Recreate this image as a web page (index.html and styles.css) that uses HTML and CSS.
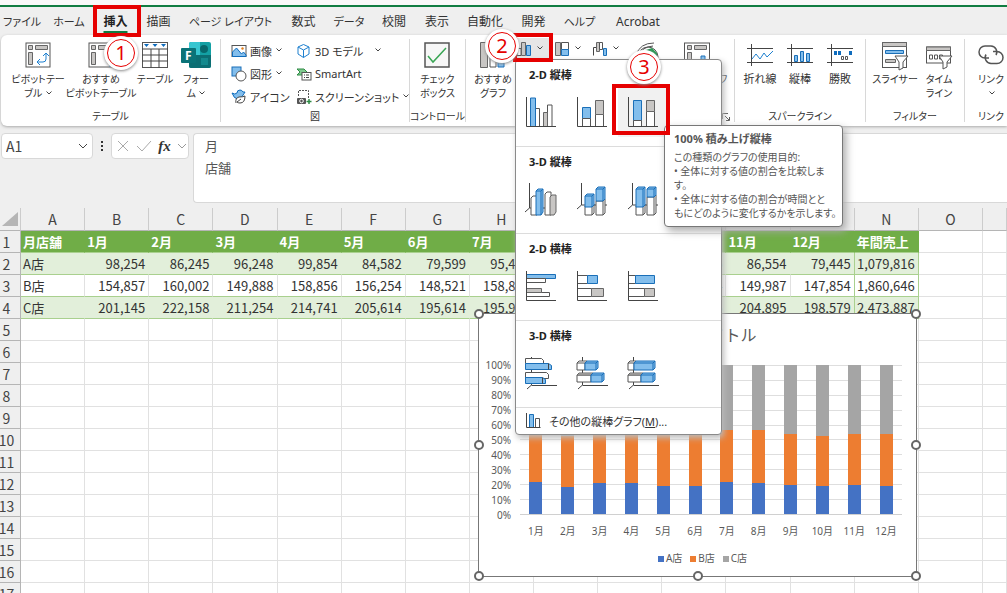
FILE: index.html
```html
<!DOCTYPE html>
<html lang="ja">
<head>
    <meta charset="UTF-8">
    <meta name="viewport" content="width=device-width, initial-scale=1.0">
    <title>店舗別売上</title>
    <link rel="stylesheet" href="styles.css">
</head>
<body>
<div class="app">
    <div class="title-edge"></div>

    <nav class="tabs">
        <button class="kana">ファイル</button>
        <button class="kana">ホーム</button>
        <button class="active">挿入</button>
        <button>描画</button>
        <button class="kana">ページ レイアウト</button>
        <button>数式</button>
        <button class="kana">データ</button>
        <button>校閲</button>
        <button>表示</button>
        <button>自動化</button>
        <button>開発</button>
        <button class="kana">ヘルプ</button>
        <button>Acrobat</button>
    </nav>

    <div class="ribbon">
        <section class="group group-table">
            <div class="group-body">
                <button class="big">
                    <svg class="icon" viewBox="0 0 26 26"><rect class="w" x="1" y="1" width="24" height="24"/><path class="g" d="M3.500 3.500h4v4h-4zM10.500 3.500h12v4h-12zM3.500 10.500h4v12h-4z"/><path class="bl" d="M13 20h5q3 0 3-3v-5M15 17l-3 3 3 3M18 14l3-3 3 3"/></svg>
                    <span>ピボットテー<br>ブル <svg class="chev" viewBox="0 0 6 4"><path d="M.5.5L3 3 5.500.5"/></svg></span>
                </button>
                <button class="big">
                    <svg class="icon" viewBox="0 0 26 26"><rect class="w" x="1" y="1" width="24" height="24"/><path class="g" d="M3.500 3.500h4v4h-4zM10.500 3.500h12v4h-12zM3.500 10.500h4v12h-4z"/><path class="bl" d="M22 16v9"/></svg>
                    <span>おすすめ<br>ピボットテーブル</span>
                </button>
                <button class="big">
                    <svg class="icon" viewBox="0 0 26 26"><rect class="w" x=".5" y=".5" width="25" height="25"/><path class="k" d="M0 7h26M0 13h26M0 19h26M9 7v19M17 7v19"/><path fill="#0f6cbd" d="M2 2h5L4.500 5zM10.500 2h5L13 5zM19 2h5l-2.500 3z"/></svg>
                    <span>テーブル</span>
                </button>
                <button class="big">
                    <svg class="icon icon-forms" viewBox="0 0 30 26"><rect x="8" width="22" height="26" rx="2" fill="#13a0a4"/><path fill="#0b6e73" d="M8 13h22v11a2 2 0 0 1-2 2H10a2 2 0 0 1-2-2z"/><path fill="#37c6d0" d="M8 2a2 2 0 0 1 2-2h9v13H8z"/><circle cx="23" cy="7" r="4" fill="#07686c"/><rect x="20" y="16" width="7" height="7" fill="#13898d"/><rect y="6" width="15" height="15" rx="1" fill="#0a7378"/><text x="4" y="18" class="forms-letter">F</text></svg>
                    <span>フォー<br>ム <svg class="chev" viewBox="0 0 6 4"><path d="M.5.5L3 3 5.500.5"/></svg></span>
                </button>
            </div>
            <h2>テーブル</h2>
        </section>

        <section class="group group-illust">
            <div class="group-body">
                <button class="small">
                    <svg class="icon-s" viewBox="0 0 16 16"><rect class="w" x="1" y="2.500" width="14" height="11"/><path d="M1.500 9l4-4 5 6 2-2 2.500 3v1.500h-13.500z" fill="#83beec" stroke="#0f6cbd"/><circle cx="11.500" cy="5.500" r="1.200" fill="#e07b1a"/></svg>
                    画像<svg class="chev" viewBox="0 0 6 4"><path d="M.5.5L3 3 5.500.5"/></svg>
                </button>
                <button class="small">
                    <svg class="icon-s" viewBox="0 0 16 16"><path class="bl" d="M7.500 1.500L13 4v7l-5.500 3.500L2 11V4zM2 4l5.500 3L13 4M7.500 7v7.500"/></svg>
                    3D モデル<svg class="chev chev-far" viewBox="0 0 6 4"><path d="M.5.5L3 3 5.500.5"/></svg>
                </button>
                <button class="small">
                    <svg class="icon-s" viewBox="0 0 16 16"><rect class="b" x="1" y="1" width="9" height="9"/><circle cx="10" cy="10" r="5" fill="#fff" stroke="#555"/></svg>
                    図形<svg class="chev" viewBox="0 0 6 4"><path d="M.5.5L3 3 5.500.5"/></svg>
                </button>
                <button class="small">
                    <svg class="icon-s" viewBox="0 0 16 16"><path d="M1 3h7l3 3-3 3H1l3-3z" fill="#7fc98f" stroke="#2e8b45"/><rect class="w" x="6" y="6.500" width="9" height="7.500"/><path class="k" d="M8 9h1M10 9h3M8 11.500h1M10 11.500h3"/></svg>
                    SmartArt
                </button>
                <button class="small">
                    <svg class="icon-s" viewBox="0 0 16 16"><path d="M1 4q3 2 5 0 0-3 3-3 2 0 3 2h2q-1 2-2 3-1 4-5 4-4 0-6-6z" fill="#83beec" stroke="#0f6cbd"/><path d="M5 14q-1-5 3-6 4 0 6-1 0 7-5 7-2 0-3-1l4-3" fill="#fff" stroke="#444"/></svg>
                    アイコン
                </button>
                <button class="small">
                    <svg class="icon-s" viewBox="0 0 16 16"><path d="M2.500 7V1.500h10V9" fill="none" stroke="#555" stroke-dasharray="2 1"/><rect x="1" y="9" width="9" height="6" rx="1" fill="#555"/><circle cx="5.500" cy="12" r="1.800" fill="#555" stroke="#fff"/><path d="M13 10v5M10.500 12.500h5" stroke="#2e8b45" stroke-width="1.500"/></svg>
                    スクリーンショット<svg class="chev" viewBox="0 0 6 4"><path d="M.5.5L3 3 5.500.5"/></svg>
                </button>
            </div>
            <h2>図</h2>
        </section>

        <section class="group group-control">
            <div class="group-body">
                <button class="big">
                    <svg class="icon" viewBox="0 0 26 26"><rect x="1" y="1" width="24" height="24" fill="#f7f7f7" stroke="#555" stroke-width="1.500"/><path d="M4 14l5 6L22 6" fill="none" stroke="#3aa655" stroke-width="1.500"/></svg>
                    <span>チェック<br>ボックス</span>
                </button>
            </div>
            <h2>コントロール</h2>
        </section>

        <section class="group group-chart">
            <div class="group-body">
                <button class="big">
                    <svg class="icon" viewBox="0 0 26 26"><path class="g" d="M.5.5h7v25h-7z"/><path class="w" d="M10 8h6v17h-6z"/><path class="b" d="M18 12h6v13h-6z"/></svg>
                    <span>おすすめ<br>グラフ</span>
                </button>
                <button class="split pressed">
                    <svg class="icon-s" viewBox="0 0 16 16"><path class="w" d="M1 7.500h4v7H1z"/><path class="g" d="M5.500 1.500h4v13h-4z"/><path class="b" d="M10.500 4.500h4v10h-4z"/></svg>
                    <svg class="chev" viewBox="0 0 6 4"><path d="M.5.5L3 3 5.500.5"/></svg>
                </button>
                <button class="split">
                    <svg class="icon-s" viewBox="0 0 16 16"><path class="g" d="M1.500 1.500h5v13h-5z"/><path class="w" d="M7.500 1.500h7v7h-7z"/><path class="b" d="M7.500 8.500h7v6h-7z"/></svg>
                    <svg class="chev" viewBox="0 0 6 4"><path d="M.5.5L3 3 5.500.5"/></svg>
                </button>
                <button class="split">
                    <svg class="icon-s" viewBox="0 0 16 16"><path class="k" d="M1.500 14.500v-8h3"/><path class="g" d="M4.500 1.500h3v9h-3z"/><path class="w" d="M7.500 1.500h3v7h-3z"/><path class="b" d="M11.500 7.500h3v7h-3z"/></svg>
                    <svg class="chev" viewBox="0 0 6 4"><path d="M.5.5L3 3 5.500.5"/></svg>
                </button>
                <button class="big big-map">
                    <svg class="icon" viewBox="0 0 26 26"><circle cx="14" cy="15" r="10" fill="#fff" stroke="#555"/><path d="M2 13Q6 1 20 1M5 13q3-8 14-9" fill="none" stroke="#555"/><path d="M12 8l6-2 5 5v8l-5-4-2-4z" fill="#2e9b57"/></svg>
                    <span>マップ</span>
                </button>
                <button class="big big-pivotchart">
                    <svg class="icon" viewBox="0 0 26 26"><rect class="w" x=".5" y="1" width="25" height="24"/><path class="g" d="M3.500 3.500h4v4h-4zM10.500 3.500h12v4h-12zM3.500 10.500h4v12h-4z"/><path class="b" d="M17 14h4v11h-4z"/></svg>
                    <span>ピボットグラフ</span>
                </button>
            </div>
            <h2>グラフ</h2>
            <svg class="launcher" viewBox="0 0 8 8"><path d="M.5 6V.5H6M3 3l4 4M7.500 4v3.500H4"/></svg>
        </section>

        <section class="group group-spark">
            <div class="group-body">
                <button class="big">
                    <svg class="icon" viewBox="0 0 26 26"><path class="k" d="M4.500 2v22M0 6.500h26M0 20.500h26"/><path class="bl" d="M5 17l4-5 4 5 4-6 3 4 6-6"/></svg>
                    <span>折れ線</span>
                </button>
                <button class="big">
                    <svg class="icon" viewBox="0 0 26 26"><path class="k" d="M4.500 2v22M0 6.500h26M0 20.500h26"/><path class="b" d="M7.500 13.500h3v6h-3zM13.500 9.500h3v10h-3zM19.500 11.500h3v8h-3z"/></svg>
                    <span>縦棒</span>
                </button>
                <button class="big">
                    <svg class="icon" viewBox="0 0 26 26"><path class="k" d="M4.500 2v22M0 6.500h26M0 20.500h26"/><path fill="#0f6cbd" d="M7 9h3v4H7zM11 9h3v4h-3zM22 9h3v4h-3z"/><path class="w" d="M14.500 14.500h2v3h-2zM18.500 14.500h2v3h-2z"/></svg>
                    <span>勝敗</span>
                </button>
            </div>
            <h2>スパークライン</h2>
        </section>

        <section class="group group-filter">
            <div class="group-body">
                <button class="big">
                    <svg class="icon" viewBox="0 0 26 26"><rect class="w" x=".5" y=".5" width="24" height="25"/><path class="g" d="M.5.5h24v4H.5z"/><path class="b" d="M3.500 8.500h18v3h-18z"/><path class="g" d="M3.500 17.500h10v3h-10z"/><path class="w" d="M13 14h13l-5 6v6l-4 2v-8z"/></svg>
                    <span>スライサー</span>
                </button>
                <button class="big">
                    <svg class="icon" viewBox="0 0 26 26"><rect class="w" x=".5" y="5" width="24" height="16"/><path class="g" d="M.5 5h24v3.500H.5z"/><path class="w" d="M3.500 13h3v4h-3zM8.500 13h3v4h-3zM13.500 13h3v4h-3z"/><path class="w" d="M13 14h13l-5 6v5l-4 2v-7z"/></svg>
                    <span>タイム<br>ライン</span>
                </button>
            </div>
            <h2>フィルター</h2>
        </section>

        <section class="group group-link">
            <div class="group-body">
                <button class="big">
                    <svg class="icon" viewBox="0 0 26 26"><path d="M11 16H7a6 6 0 0 1 0-12h6a6 6 0 0 1 5 9M15 9.500h4a6 6 0 0 1 0 12h-6a6 6 0 0 1-5-9" fill="none" stroke="#555" stroke-width="1.500"/></svg>
                    <span>リンク<br><svg class="chev" viewBox="0 0 6 4"><path d="M.5.5L3 3 5.500.5"/></svg></span>
                </button>
            </div>
            <h2>リンク</h2>
        </section>
    </div>

    <div class="formula-bar">
        <div class="name-box">
            <input type="text" value="A1" aria-label="名前ボックス">
            <svg class="chev-l" viewBox="0 0 10 6"><path d="M1 1l4 4 4-4"/></svg>
        </div>
        <span class="dots"><i></i><i></i><i></i></span>
        <div class="fx-box">
            <button aria-label="キャンセル"><svg width="14" height="14" viewBox="0 0 14 14"><path d="M2 2l10 10M12 2L2 12"/></svg></button>
            <button aria-label="入力"><svg width="16" height="14" viewBox="0 0 16 14"><path d="M1 7l5 5L15 2"/></svg></button>
            <button class="fx" aria-label="関数の挿入">fx</button>
            <svg class="chev-l chev-gray" viewBox="0 0 10 6"><path d="M1 1l4 4 4-4"/></svg>
        </div>
        <textarea class="formula" aria-label="数式バー">月
店舗</textarea>
    </div>

    <table class="sheet">
        <thead><tr id="columns"></tr></thead>
        <tbody id="rows"></tbody>
    </table>

    <!-- 100% 積み上げ縦棒グラフ -->
    <div class="chart">
        <div class="chart-title">グラフ タイトル</div>
        <div class="chart-body">
            <div class="y-axis">
                <span>100%</span><span>90%</span><span>80%</span><span>70%</span><span>60%</span><span>50%</span><span>40%</span><span>30%</span><span>20%</span><span>10%</span><span>0%</span>
            </div>
            <div class="plot" id="plot"></div>
        </div>
        <div class="x-axis" id="x-axis"></div>
        <div class="legend">
            <span><i class="fill-a"></i>A店</span>
            <span><i class="fill-b"></i>B店</span>
            <span><i class="fill-c"></i>C店</span>
        </div>
        <i class="handle top left"></i><i class="handle top right"></i>
        <i class="handle middle left"></i><i class="handle middle right"></i>
        <i class="handle bottom left"></i><i class="handle bottom center"></i><i class="handle bottom right"></i>
    </div>

    <div class="menu">
        <section>
            <h3>2-D 縦棒</h3>
            <div class="choices">
                <button aria-label="集合縦棒"><svg viewBox="0 0 32 32"><path class="w" d="M10.500 12.500h4v18h-4zM22.500 9h4.500v21.500h-4.500z"/><path class="g" d="M18.500 16.500h4v14h-4z"/><path class="b" d="M5.500 2h5v28.500h-5z"/><path class="k" d="M1.500 1v29.500H31"/></svg></button>
                <button aria-label="積み上げ縦棒"><svg viewBox="0 0 32 32"><path class="b" d="M6.500 11.500h8v11h-8z"/><path class="w" d="M6.500 22.500h8v8h-8zM19.500 18.500h8v12h-8z"/><path class="g" d="M19.500 4.500h8v14h-8z"/><path class="k" d="M1.500 1v29.500H31"/></svg></button>
                <button class="selected" aria-label="100% 積み上げ縦棒"><svg viewBox="0 0 32 32"><path class="b" d="M6.500 4.500h8v20h-8z"/><path class="w" d="M6.500 24.500h8v6h-8zM19.500 15.500h8v15h-8z"/><path class="g" d="M19.500 4.500h8v11h-8z"/><path class="k" d="M1.500 1v29.500H31"/></svg></button>
            </div>
        </section>
        <section>
            <h3>3-D 縦棒</h3>
            <div class="choices">
                <button aria-label="3-D 集合縦棒"><svg viewBox="0 0 32 32"><path class="k" d="M4.500 0v25L0 29M4.500 25H31"/><path class="w" d="M6 15l2-2h4v19H6zM20 11l2-2h4v23h-6z"/><path class="g" d="M25 14l2-2h4v17l-2 3h-4z"/><path class="b" d="M11 8l2-2h5v23l-2 3h-5zM11 8h5v24M16 8l2-2"/></svg></button>
                <button aria-label="3-D 積み上げ縦棒"><svg viewBox="0 0 32 32"><path class="k" d="M5.500 0v22L1 26M5.500 22H31"/><path class="w" d="M9 23h7l2-2v9l-2 2H9zM16 23v9M20 18h7l2-2v14l-2 2h-7zM27 18v14"/><path class="b" d="M9 13l2-2h7v11l-2 2H9zM9 13h7v11M16 13l2-2M20 6l2-2h7v12l-2 2h-7zM20 6h7v12M27 6l2-2"/></svg></button>
                <button aria-label="3-D 100% 積み上げ縦棒"><svg viewBox="0 0 32 32"><path class="k" d="M5.500 0v22L1 26M5.500 22H31"/><path class="w" d="M9 23h7l2-2v9l-2 2H9zM16 23v9M20 14h7l2-2v18l-2 2h-7zM27 14v18"/><path class="b" d="M9 6l2-2h7v18l-2 2H9zM9 6h7v18M16 6l2-2M20 6l2-2h7v8l-2 2h-7zM20 6h7v8M27 6l2-2"/></svg></button>
            </div>
        </section>
        <section>
            <h3>2-D 横棒</h3>
            <div class="choices">
                <button aria-label="集合横棒"><svg viewBox="0 0 32 32"><path class="b" d="M1.500 4.500H30.500v4H1.500z"/><path class="w" d="M1.500 8.500H20.500v4H1.500zM1.500 22.500H24.500v4H1.500z"/><path class="g" d="M1.500 18.500H16.500v4H1.500z"/><path class="k" d="M1.500 1v29.500H31"/></svg></button>
                <button aria-label="積み上げ横棒"><svg viewBox="0 0 32 32"><path class="w" d="M1.500 5.500H11.500v8H1.500zM1.500 18.500H15.500v8H1.500z"/><path class="b" d="M11.500 5.500h10v8h-10z"/><path class="g" d="M15.500 18.500h12v8h-12z"/><path class="k" d="M1.500 1v29.500H31"/></svg></button>
                <button aria-label="100% 積み上げ横棒"><svg viewBox="0 0 32 32"><path class="w" d="M1.500 5.500H8.500v8H1.500zM1.500 18.500H17.500v8H1.500z"/><path class="b" d="M8.500 5.500h19v8h-19z"/><path class="g" d="M17.500 18.500h10v8h-10z"/><path class="k" d="M1.500 1v29.500H31"/></svg></button>
            </div>
        </section>
        <section>
            <h3>3-D 横棒</h3>
            <div class="choices">
                <button aria-label="3-D 集合横棒"><svg viewBox="0 0 32 32"><path class="k" d="M6.500 0v28L2 32M6.500 28.500H32"/><path class="w" d="M.5 1.500h16l2 2v3H.5zM.5 15.500h21l2 2v4H.5z"/><path class="b" d="M.5 6.500h23l3 2v4H.5zM.5 20.500h17l3 2v4H.5z"/><path class="k" d="M23.500 6.500v6M17.500 20.500v6"/></svg></button>
                <button aria-label="3-D 積み上げ横棒"><svg viewBox="0 0 32 32"><path class="k" d="M6.500 0v28L2 32M6.500 28.500H32"/><path class="w" d="M1 6l2-2h8l-2 2v7H1zM1 6h8M1 18h14v7H1z"/><path class="g" d="M1 18l2-2h14l-2 2z"/><path class="b" d="M9 6l2-2h11v7l-2 2H9zM9 6h11v7M20 6l2-2M15 18l2-2h11v7l-2 2H15zM15 18h11v7M26 18l2-2"/></svg></button>
                <button aria-label="3-D 100% 積み上げ横棒"><svg viewBox="0 0 32 32"><path class="k" d="M6.500 0v28L2 32M6.500 28.500H32"/><path class="w" d="M1 6l2-2h6l-2 2v7H1zM1 6h6M1 18h13v7H1z"/><path class="g" d="M1 18l2-2h13l-2 2z"/><path class="b" d="M7 6l2-2h19v7l-2 2H7zM7 6h19v7M26 6l2-2M14 18l2-2h12v7l-2 2H14zM14 18h12v7M26 18l2-2"/></svg></button>
            </div>
        </section>
        <button class="more">
            <svg viewBox="0 0 16 16"><path class="b" d="M3.500 1.500h4v13h-4z"/><path class="w" d="M9.500 5.500h4v9h-4z"/><path class="k" d="M.5 0v14.500h14"/></svg>
            <span>その他の縦棒グラフ(<u>M</u>)...</span>
        </button>
    </div>

    <div class="tooltip" role="tooltip">
        <strong>100% 積み上げ縦棒</strong>
        <p>この種類のグラフの使用目的:<br>• 全体に対する値の割合を比較しま<br>す。<br>• 全体に対する値の割合が時間とと<br>もにどのように変化するかを示します。</p>
    </div>

    <!-- 操作手順の目印 -->
    <div class="mark mark-1"></div>
    <div class="mark mark-2"></div>
    <div class="mark mark-3"></div>
    <div class="step step-1">1</div>
    <div class="step step-2">2</div>
    <div class="step step-3">3</div>
</div>

<script>
    const columns = 'ABCDEFGHIJKLMNOP'.split('');
    const months = ['1月', '2月', '3月', '4月', '5月', '6月', '7月', '8月', '9月', '10月', '11月', '12月'];
    const shops = [
        { name: 'A店', total: 1079816, values: [98254, 86245, 96248, 99854, 84582, 79599, 95458, 94210, 88240, 85645, 86554, 79445] },
        { name: 'B店', total: 1860646, values: [154857, 160002, 149888, 158856, 156254, 148521, 158846, 162900, 154365, 149754, 149987, 147854] },
        { name: 'C店', total: 2473887, values: [201145, 222158, 211254, 214741, 205614, 195614, 195932, 197900, 207640, 213005, 204895, 198579] }
    ];
    const rowCount = 17;

    function makeRow(number, cells, className) {
        let html = `<tr class="${className}"><th scope="row">${number}</th>`;
        for (let i = 0; i < columns.length; i++) {
            html += `<td>${cells[i] || ''}</td>`;
        }
        return html + '</tr>';
    }

    // シート
    document.getElementById('columns').innerHTML =
        '<th class="corner"><svg viewBox="0 0 16 14"><path d="M16 0v14H0z"/></svg></th>' +
        columns.map(c => `<th scope="col">${c === 'P' ? '' : c}</th>`).join('');

    let rows = makeRow(1, ['月店舗', ...months, '年間売上'], 'data head');
    shops.forEach((shop, i) => {
        const cells = [shop.name, ...shop.values, shop.total].map(v => v.toLocaleString('en-US'));
        rows += makeRow(i + 2, cells, i % 2 === 0 ? 'data band' : 'data');
    });
    for (let n = 5; n <= rowCount; n++) {
        rows += makeRow(n, [], '');
    }
    document.getElementById('rows').innerHTML = rows;

    // グラフ
    document.getElementById('plot').innerHTML = months.map((m, i) => {
        const sum = shops.reduce((s, shop) => s + shop.values[i], 0);
        const [a, b, c] = shops.map(shop => shop.values[i] / sum * 100);
        return `<div class="bar"><i class="fill-c" style="height:${c}%"></i><i class="fill-b" style="height:${b}%"></i><i class="fill-a" style="height:${a}%"></i></div>`;
    }).join('');
    document.getElementById('x-axis').innerHTML = months.map(m => `<span>${m}</span>`).join('');
</script>
</body>
</html>
```
FILE: styles.css
```css
* {
    box-sizing: border-box;
}
body {
    margin: 0;
    font-family: "Noto Sans", "Noto Sans CJK JP", sans-serif;
    font-size: 12px;
    color: #333;
    background-color: #efefef;
}
button {
    border: 0;
    padding: 0;
    background: none;
    font: inherit;
    color: inherit;
    white-space: nowrap;
}
h2, h3, p {
    margin: 0;
    font-weight: normal;
}
svg {
    display: block;
    overflow: visible;
}
.app {
    position: relative;
    height: 100vh;
    overflow: hidden;
}

/* アイコンの色 */
.b { fill: #83beec; stroke: #1a6fb8; }
.w { fill: #fff; stroke: #555; }
.g { fill: #c8c6c4; stroke: #666; }
.k { fill: none; stroke: #444; }
.bl { fill: none; stroke: #1e80cf; }

/* タブ */
.title-edge {
    height: 5px;
    background-color: #f8f8f8;
}
.tabs {
    display: grid;
    grid-template-columns: 44px 50px 43px 43px 101px 45px 46px 44px 42px 54px 43px 49px 68px;
    height: 30px;
    border-top: 2px solid #107c41;
    font-feature-settings: "palt";
}
.tabs button {
    display: flex;
    justify-content: center;
    align-items: center;
}
.tabs .kana { font-size: 11px; }
.tabs .active {
    font-weight: bold;
    color: #222;
    text-decoration: underline 2px #107c41;
    text-underline-offset: 5px;
}

/* リボン */
.ribbon {
    display: flex;
    height: 91px;
    margin-left: 1px;
    background: white;
    border-radius: 6px 0 0 6px;
    box-shadow: 0 1px 3px #aaa;
    overflow: hidden;
    font-feature-settings: "palt";
}
.group {
    position: relative;
    display: flex;
    flex-direction: column;
    flex: none;
    margin: 4px 0;
    border-right: 1px solid #d8d8d8;
}
.group-body {
    display: flex;
    flex: 1;
    padding-top: 3px;
}
.group h2 {
    font-size: 10px;
    line-height: 12px;
    text-align: center;
    white-space: nowrap;
}
.group-table { width: 220px; }
.group-table .group-body {
    display: grid;
    grid-template-columns: 66px 60px 48px 34px;
    padding-left: 4px;
}
.group-illust { width: 189px; }
.group-illust .group-body {
    display: grid;
    grid-template-columns: 65px 1fr;
    grid-auto-rows: 23px;
    align-content: start;
    padding: 0 0 0 10px;
}
.group-control { width: 56px; }
.group-control .group-body { justify-content: center; }
.group-chart { width: 269px; }
.group-chart .group-body { padding-left: 8px; }
.group-chart .big { width: 38px; }
.group-chart .big-map { margin-left: 2px; }
.group-chart .big-pivotchart { margin-left: 12px; }
.group-spark { width: 131px; }
.group-spark .group-body { padding-left: 5px; }
.group-spark .big {
    width: 40px;
    font-size: 11px;
}
.group-filter { width: 99px; }
.group-filter .group-body { padding-left: 7px; }
.group-filter .big { width: 44px; }
.group-link { width: 52px; border-right: 0; }
.group-link .group-body { justify-content: center; }
.big {
    display: flex;
    flex-direction: column;
    align-items: center;
    gap: 4px;
    font-size: 10px;
    line-height: 14px;
}
.icon {
    flex: none;
    width: 26px;
    height: 26px;
}
.icon-forms { width: 30px; }
.forms-letter {
    font-size: 12px;
    font-weight: bold;
    fill: white;
}
.icon-s {
    flex: none;
    width: 16px;
    height: 16px;
}
.small {
    display: flex;
    align-items: center;
    gap: 3px;
    font-size: 11px;
}
.chev {
    display: inline-block;
    flex: none;
    width: 6px;
    height: 4px;
    margin: 0 0 2px 1px;
}
.chev path, .chev-l path {
    fill: none;
    stroke: #444;
}
.small .chev-far { margin-left: 9px; }
.split {
    display: flex;
    align-items: center;
    gap: 4px;
    width: 38px;
    height: 22px;
    padding-left: 4px;
    margin-top: -4px;
}
.pressed { background-color: #e6e6e6; }
.launcher {
    position: absolute;
    right: 4px;
    bottom: 1px;
    width: 8px;
    height: 8px;
    fill: none;
    stroke: #555;
}

/* 数式バー */
.formula-bar {
    display: flex;
    align-items: flex-start;
    padding: 7px 0 5px 1px;
}
.name-box, .fx-box {
    display: flex;
    align-items: center;
    height: 26px;
    background: white;
    border: 1px solid #d8d8d8;
    border-radius: 4px;
}
.name-box {
    width: 92px;
    padding: 0 3px 0 4px;
}
.name-box input {
    width: 72px;
    border: 0;
    padding: 0;
    font: 14px "Noto Sans CJK JP", sans-serif;
    line-height: 20px;
    color: #444;
}
.chev-l {
    flex: none;
    width: 10px;
    height: 6px;
}
.chev-gray path { stroke: #999; }
.dots {
    display: flex;
    flex-direction: column;
    gap: 2px;
    width: 18px;
    align-items: center;
    padding-top: 8px;
}
.dots i {
    width: 2px;
    height: 2px;
    background-color: #333;
}
.fx-box {
    width: 78px;
    justify-content: space-between;
    padding: 0 1px 0 4px;
}
.fx-box button svg {
    fill: none;
    stroke: #aaa;
}
.fx-box .fx {
    font: italic bold 15px "Liberation Serif", serif;
}
.formula {
    flex: 1;
    height: 70px;
    margin-left: 4px;
    padding: 1px 11px;
    border: 1px solid #d8d8d8;
    border-right: 0;
    border-radius: 4px 0 0 4px;
    resize: none;
    font: 13px "Noto Sans CJK JP", sans-serif;
    line-height: 22px;
    color: #555;
}

/* シート */
.sheet {
    width: 100%;
    table-layout: fixed;
    border-collapse: separate;
    border-spacing: 0;
    background: white;
    font: 13px "Noto Sans CJK JP", sans-serif;
    line-height: 20px;
}
.sheet th, .sheet td {
    height: 22px;
    padding: 0 3px 0 2px;
    border-right: 1px solid #e1e1e1;
    border-bottom: 1px solid #e1e1e1;
    white-space: nowrap;
    overflow: hidden;
}
.sheet th {
    padding: 0;
    background-color: #efefef;
    border-color: #b5b5b5;
    font-weight: normal;
    color: #444;
}
.sheet thead th {
    height: 23px;
    font-size: 14px;
    border-right-color: #ccc;
}
.sheet thead th:last-child { width: 24px; }
.sheet .corner { width: 21px; }
.corner svg {
    width: 16px;
    height: 14px;
    margin-left: 2px;
    fill: #b5b5b5;
}
.sheet tbody th {
    font-size: 14px;
    text-indent: -7px;
}
.data td:nth-child(-n+15) {
    border-bottom-color: #a9d08e;
    text-align: right;
}
.data td:nth-child(2) { text-align: left; }
.data td:nth-child(14), .data td:nth-child(15) {
    border-right-color: #a9d08e;
}
.head td:nth-child(-n+15) {
    background-color: #70ad47;
    border-right-color: #70ad47;
    color: white;
    font-weight: bold;
    text-align: left;
}
.band td:nth-child(-n+15) { background-color: #e2efda; }
.band td:nth-child(-n+13) { border-right-color: #e2efda; }

/* グラフ */
.chart {
    position: absolute;
    left: 478px;
    top: 313px;
    width: 439px;
    height: 264px;
    padding: 10px 14px 0 6px;
    background: white;
    border: 1px solid #777;
    font-size: 10px;
    line-height: 14px;
    color: #595959;
}
.chart-title {
    font-size: 16px;
    line-height: 22px;
    text-align: center;
    padding-left: 10px;
}
.chart-body {
    display: flex;
    gap: 9px;
    height: 150px;
    margin-top: 19px;
}
.y-axis {
    display: flex;
    flex-direction: column;
    justify-content: space-between;
    width: 26px;
    margin: -7px 0;
    text-align: right;
}
.plot {
    display: flex;
    flex: 1;
    justify-content: space-around;
    background: repeating-linear-gradient(#dedede 0 1px, transparent 1px 10%);
    border-bottom: 1px solid #d0d0d0;
}
.bar {
    display: flex;
    flex-direction: column;
    width: 13px;
}
.fill-a { background-color: #4472c4; }
.fill-b { background-color: #ed7d31; }
.fill-c { background-color: #a5a5a5; }
.x-axis {
    display: flex;
    margin: 9px 0 0 35px;
}
.x-axis span {
    flex: 1 0 0;
    text-align: center;
}
.legend {
    display: flex;
    justify-content: center;
    gap: 8px;
    margin-top: 13px;
    padding-left: 18px;
}
.legend i {
    display: inline-block;
    width: 6px;
    height: 6px;
    margin-right: 2px;
}
.handle {
    position: absolute;
    width: 10px;
    height: 10px;
    background: white;
    border: 2px solid #666;
    border-radius: 50%;
}
.top { top: -5px; }
.middle { top: 126px; }
.bottom { bottom: -5px; }
.left { left: -5px; }
.center { left: 214px; }
.right { right: -5px; }

/* グラフの種類メニュー */
.menu {
    position: absolute;
    left: 515px;
    top: 59px;
    width: 207px;
    background: white;
    border: 1px solid #8a8a8a;
    border-radius: 4px;
    box-shadow: 2px 3px 6px #bbb;
}
.menu section {
    padding: 7px 0 9px;
    border-bottom: 1px solid #dcdcdc;
}
.menu h3 {
    padding-left: 13px;
    font-size: 11px;
    font-weight: bold;
    line-height: 16px;
    color: #222;
}
.choices {
    display: flex;
    margin-top: 4px;
}
.choices button {
    width: 51px;
    height: 50px;
    padding: 9px;
}
.choices svg {
    width: 32px;
    height: 32px;
}
.choices .selected { background-color: #f1f1f1; }
.more {
    display: flex;
    align-items: center;
    gap: 7px;
    height: 26px;
    padding-left: 10px;
    font-size: 11px;
    font-feature-settings: "palt";
}
.more svg {
    width: 16px;
    height: 16px;
}

.tooltip {
    position: absolute;
    left: 664px;
    top: 125px;
    width: 179px;
    padding: 5px 9px 6px;
    background: white;
    border: 1px solid #777;
    border-radius: 4px;
    box-shadow: 3px 4px 8px #aaa;
    font-size: 11px;
    line-height: 16px;
    color: #555;
    white-space: nowrap;
}
.tooltip p {
    margin-top: 3px;
    font-size: 10px;
    line-height: 14px;
    font-feature-settings: "palt";
}

.mark {
    position: absolute;
    border: 4px solid #e60000;
}
.mark-1 { left: 93px; top: 5px; width: 48px; height: 32px; }
.mark-2 { left: 513px; top: 33px; width: 40px; height: 29px; }
.mark-3 { left: 612px; top: 84px; width: 58px; height: 51px; }
.step {
    position: absolute;
    width: 28px;
    height: 28px;
    border: 1px solid #e60000;
    border-radius: 50%;
    background: white;
    box-shadow: 0 0 0 3px white, 0 1px 3px 3px #888;
    font-size: 20px;
    line-height: 26px;
    text-align: center;
    color: #e60000;
}
.step-1 { left: 107px; top: 39px; }
.step-2 { left: 488px; top: 32px; }
.step-3 { left: 630px; top: 53px; }
```
